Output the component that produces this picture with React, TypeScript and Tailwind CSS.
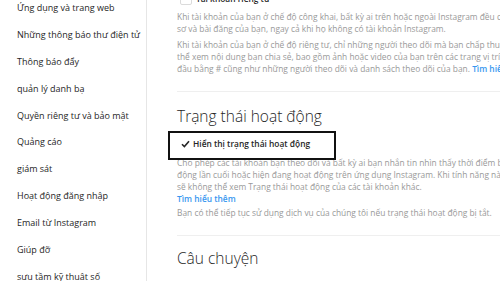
import React from "react";

const sideItems = [
  "Ứng dụng và trang web",
  "Những thông báo thư điện tử",
  "Thông báo đẩy",
  "quản lý danh bạ",
  "Quyền riêng tư và bảo mật",
  "Quảng cáo",
  "giám sát",
  "Hoạt động đăng nhập",
  "Email từ Instagram",
  "Giúp đỡ",
  "sưu tầm kỹ thuật số",
];

function Check() {
  return (
    <svg width="9" height="8" viewBox="0 0 9 8" className="shrink-0">
      <path d="M1 4.2 L3.4 6.6 L8 1.2" fill="none" stroke="#262626" strokeWidth="1.6" />
    </svg>
  );
}

export default function App() {
  return (
    <div className="w-[500px] h-[281px] overflow-hidden bg-white flex font-['Open_Sans',sans-serif]">
      <div className="w-[147px] shrink-0 border-r border-[#e6e6e6] h-full overflow-hidden">
        <div className="-mt-[5.4px] flex flex-col">
          {sideItems.map((t) => (
            <div
              key={t}
              className="h-[26.84px] shrink-0 flex items-center pl-[17px] text-[9px] whitespace-nowrap text-[#262626]"
            >
              {t}
            </div>
          ))}
        </div>
      </div>
      <div className="flex-1 min-w-0 overflow-hidden pl-[30px]">
        <div className="-mt-[8px] flex flex-col w-[600px]">
          <div className="h-[14px] flex items-center">
            <div className="ml-[3px] w-[12px] h-[12px] rounded-[2px] border border-[#dbdbdb] bg-white" />
            <span className="ml-[4px] text-[8.4px] font-semibold text-[#262626] leading-none">Tài khoản riêng tư</span>
          </div>
          <p className="mt-[4.5px] text-[8.4px] leading-[12px] text-[#999999] whitespace-nowrap">
            Khi tài khoản của bạn ở chế độ công khai, bất kỳ ai trên hoặc ngoài Instagram đều có thể xem hồ
            <br />
            sơ và bài đăng của bạn, ngay cả khi họ không có tài khoản Instagram.
          </p>
          <p className="mt-[4.5px] text-[8.4px] leading-[12px] text-[#999999] whitespace-nowrap">
            Khi tài khoản của bạn ở chế độ riêng tư, chỉ những người theo dõi mà bạn chấp thuận mới có
            <br />
            thể xem nội dung bạn chia sẻ, bao gồm ảnh hoặc video của bạn trên các trang vị trí và thẻ bắt
            <br />
            đầu bằng # cũng như những người theo dõi và danh sách theo dõi của bạn.{" "}
            <span className="text-[#3897f0] font-semibold">Tìm hiểu thêm</span>
          </p>
          <div className="mt-[16px] h-px bg-[#efefef]" />
          <h2 className="mt-[14px] text-[15.5px] leading-[20px] font-light text-[#262626]">Trạng thái hoạt động</h2>
          <div className="relative mt-[5px] h-[26px] flex items-center">
            <div className="ml-[4px]">
              <Check />
            </div>
            <span className="ml-[3px] text-[8.4px] font-semibold text-[#262626] leading-none">
              Hiển thị trạng thái hoạt động
            </span>
            <div className="absolute -left-[9px] top-0 w-[168px] h-[29px] border-2 border-[#111111]" />
          </div>
          <p className="text-[8.4px] leading-[12px] text-[#999999] whitespace-nowrap">
            Cho phép các tài khoản bạn theo dõi và bất kỳ ai bạn nhắn tin nhìn thấy thời điểm bạn hoạt
            <br />
            động lần cuối hoặc hiện đang hoạt động trên ứng dụng Instagram. Khi tính năng này bị tắt, bạn
            <br />
            sẽ không thể xem Trạng thái hoạt động của các tài khoản khác.
          </p>
          <div className="text-[8.4px] leading-[12px] text-[#3897f0] font-semibold">Tìm hiểu thêm</div>
          <p className="mt-[2px] text-[8.4px] leading-[12px] text-[#999999] whitespace-nowrap">
            Bạn có thể tiếp tục sử dụng dịch vụ của chúng tôi nếu trạng thái hoạt động bị tắt.
          </p>
          <div className="mt-[16px] h-px bg-[#efefef]" />
          <h2 className="mt-[12px] text-[15.5px] leading-[20px] font-light text-[#262626]">Câu chuyện</h2>
        </div>
      </div>
    </div>
  );
}
